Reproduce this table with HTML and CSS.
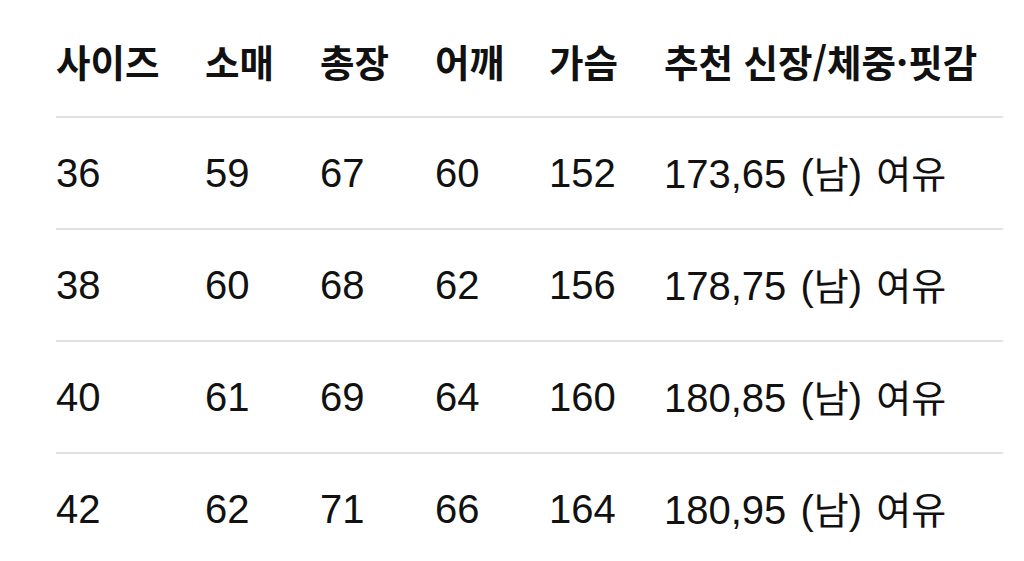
FILE: index.html
```html
<!DOCTYPE html>
<html lang="ko">
<head>
<meta charset="utf-8">
<link rel="stylesheet" href="styles.css">
</head>
<body>
<div class="table">
  <div class="row head">
    <div class="cell ko">사이즈</div>
    <div class="cell ko">소매</div>
    <div class="cell ko">총장</div>
    <div class="cell ko">어깨</div>
    <div class="cell ko">가슴</div>
    <div class="cell ko">추천 신장/체중·핏감</div>
  </div>
  <div class="row">
    <div class="cell">36</div><div class="cell">59</div><div class="cell">67</div><div class="cell">60</div><div class="cell">152</div>
    <div class="cell wide">173,65 (<span class="ko">남</span>) <span class="ko">여유</span></div>
  </div>
  <div class="row">
    <div class="cell">38</div><div class="cell">60</div><div class="cell">68</div><div class="cell">62</div><div class="cell">156</div>
    <div class="cell wide">178,75 (<span class="ko">남</span>) <span class="ko">여유</span></div>
  </div>
  <div class="row">
    <div class="cell">40</div><div class="cell">61</div><div class="cell">69</div><div class="cell">64</div><div class="cell">160</div>
    <div class="cell wide">180,85 (<span class="ko">남</span>) <span class="ko">여유</span></div>
  </div>
  <div class="row">
    <div class="cell">42</div><div class="cell">62</div><div class="cell">71</div><div class="cell">66</div><div class="cell">164</div>
    <div class="cell wide">180,95 (<span class="ko">남</span>) <span class="ko">여유</span></div>
  </div>
</div>
</body>
</html>
```
FILE: styles.css
```css
html, body {
  margin: 0;
  padding: 0;
  background: #ffffff;
}
body {
  font-family: "Liberation Sans", "Noto Sans CJK KR", sans-serif;
  color: #111111;
  overflow: hidden;
}
.table {
  margin: 6px 21px 0 56px;
}
.row {
  display: grid;
  grid-template-columns: 149px 115px 115px 114px 115px 1fr;
  height: 110px;
  align-items: center;
  border-bottom: 2px solid #e2e2e2;
  font-size: 40px;
}
.cell {
  white-space: nowrap;
  line-height: 1;
}
.wide {
  word-spacing: 3px;
}
.ko {
  font-family: "Noto Sans CJK KR", sans-serif;
  font-size: 38px;
}
.head .cell {
  font-weight: 700;
  font-size: 37.5px;
}
```
